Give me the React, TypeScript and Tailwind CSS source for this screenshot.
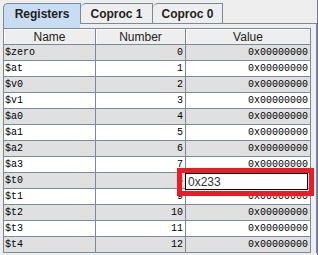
import React from 'react';

const registers = ['$zero', '$at', '$v0', '$v1', '$a0', '$a1', '$a2', '$a3', '$t0', '$t1', '$t2', '$t3', '$t4'];

const Tab: React.FC<{ label: string; selected?: boolean; width: string }> = ({ label, selected, width }) => (
  <div
    className={`mt-[3px] h-[21px] ${width} flex items-center justify-center rounded-tl-[5px] border-t border-r border-[#7a8a99] text-[12px] font-bold text-[#222] ${
      selected ? 'border-l bg-[#c8ddf2]' : 'border-b bg-[#eeeeee]'
    }`}
  >
    {label}
  </div>
);

const App: React.FC = () => {
  return (
    <div className="relative w-[318px] h-[255px] overflow-hidden bg-[#eeeeee] border-r border-[#7d6bb0] font-['Liberation_Sans',Arial,sans-serif]">
      {/* tab strip */}
      <div className="flex h-[24px] pl-[3px]">
        <Tab label="Registers" selected width="w-[78px]" />
        <Tab label="Coproc 1" width="w-[72px]" />
        <Tab label="Coproc 0" width="w-[70px]" />
        <div className="flex-1 border-b border-[#7a8a99]" />
      </div>
      <div className="flex h-[4px] pl-[3px]">
        <div className="w-[77px] border-l border-[#7a8a99] bg-[#c8ddf2]" />
        <div className="flex-1" />
        <div className="w-[1px] bg-[#7a8a99]" />
      </div>

      {/* table */}
      <div className="flex">
        <div className="ml-[3px] border-l border-[#7a8a99]">
          <div className="flex h-[17px] border-y border-[#7a8a99] text-[12px] text-[#222]">
            <div className="w-[92px] flex items-center justify-center border-r border-[#7a8a99] shadow-[inset_1px_1px_0_#fff]">Name</div>
            <div className="w-[90px] flex items-center justify-center border-r border-[#7a8a99] shadow-[inset_1px_1px_0_#fff]">Number</div>
            <div className="w-[125px] flex items-center justify-center border-r border-[#7a8a99] shadow-[inset_1px_1px_0_#fff]">Value</div>
          </div>
          {registers.map((name, i) => (
            <div
              key={name}
              className={`flex h-[16px] border-b border-[#7a8a99] font-['Liberation_Mono','Courier_New',monospace] text-[10px] text-black ${
                i % 2 === 0 ? 'bg-[#e0e0e0]' : 'bg-white'
              }`}
            >
              <div className="w-[92px] flex items-center pl-[1px] border-r border-[#7a8a99]">{name}</div>
              <div className="w-[90px] flex items-center justify-end pr-[2px] border-r border-[#7a8a99]">{i}</div>
              <div className="w-[125px] flex items-center justify-end pr-[2px] border-r border-[#7a8a99]">0x00000000</div>
            </div>
          ))}
        </div>
        <div className="flex w-[6px]">
          <div className="w-[5px]" />
          <div className="w-[1px] bg-[#7a8a99]" />
        </div>
      </div>

      {/* cell editor */}
      <div className="absolute left-[185px] top-[173px] w-[123px] h-[17px] flex items-center border border-black bg-white pl-[2px] text-[12px] text-[#333]">
        0x233
      </div>

      {/* annotation */}
      <div className="absolute left-[177px] top-[168px] w-[137px] h-[28px] border-[5px] border-[#ed1c24]" />
    </div>
  );
};

export default App;
